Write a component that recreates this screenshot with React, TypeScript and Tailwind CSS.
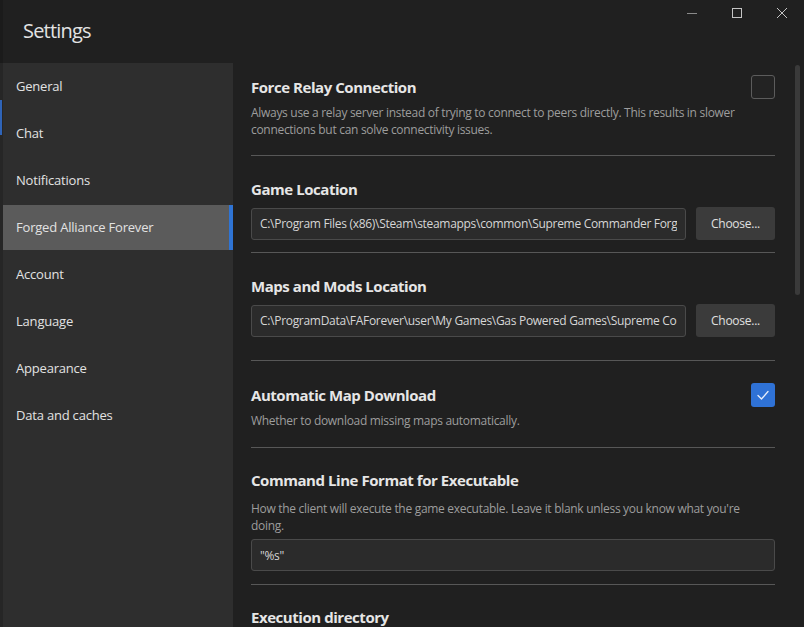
import React from "react";

const font = { fontFamily: '"Open Sans", "Noto Sans", sans-serif' };

const navItems = [
  "General",
  "Chat",
  "Notifications",
  "Forged Alliance Forever",
  "Account",
  "Language",
  "Appearance",
  "Data and caches",
];

function Heading({ children }: { children: React.ReactNode }) {
  return (
    <div className="text-[15px] leading-[20px] font-bold text-[#e6e6e6] tracking-[-0.45px]">
      {children}
    </div>
  );
}

function Desc({ children, className = "" }: { children: React.ReactNode; className?: string }) {
  return (
    <div className={`text-[12px] leading-[17px] text-[#9d9d9d] tracking-[-0.3px] ${className}`}>
      {children}
    </div>
  );
}

function Field({ value, className = "" }: { value: string; className?: string }) {
  return (
    <input
      readOnly
      value={value}
      className={`h-[32px] rounded-[3px] border border-[#4a4a4a] bg-[#2b2b2b] px-[8px] text-[12px] text-[#d6d6d6] tracking-[-0.3px] outline-none ${className}`}
      style={font}
    />
  );
}

function Checkbox({ checked }: { checked?: boolean }) {
  if (checked) {
    return (
      <div className="w-[24px] h-[24px] rounded-[3px] bg-[#2f72d6] flex items-center justify-center">
        <svg width="14" height="14" viewBox="0 0 14 14" fill="none">
          <path d="M2 7.5 L5.5 11 L12 3.5" stroke="#e8eefa" strokeWidth="1.3" strokeLinecap="round" strokeLinejoin="round" />
        </svg>
      </div>
    );
  }
  return <div className="w-[24px] h-[24px] rounded-[3px] border border-[#5c5c5c] bg-[#232323]" />;
}

function ChooseButton() {
  return (
    <div className="w-[79px] h-[33px] shrink-0 rounded-[3px] bg-[#3b3b3b] flex items-center justify-center text-[12px] text-[#e0e0e0] tracking-[-0.25px]">
      Choose...
    </div>
  );
}

export default function App() {
  return (
    <div className="w-[804px] h-[627px] bg-[#202020] flex flex-col overflow-hidden" style={font}>
      {/* title bar */}
      <div className="h-[63px] flex shrink-0">
        <div className="w-[3px] bg-[#1b1b1b]" />
        <div className="flex-1 relative">
          <div className="pl-[20px] pt-[17px] text-[20px] leading-[28px] text-[#e3e3e3] tracking-[-0.8px]">
            Settings
          </div>
          <div className="absolute top-0 right-0 flex">
            <div className="w-[45px] h-[25px] flex items-center justify-center">
              <svg width="12" height="12" viewBox="0 0 12 12">
                <path d="M1 6.5 H11" stroke="#8a8a8a" strokeWidth="1" />
              </svg>
            </div>
            <div className="w-[45px] h-[25px] flex items-center justify-center">
              <svg width="12" height="12" viewBox="0 0 12 12">
                <rect x="1.5" y="1.5" width="9" height="9" stroke="#c4c4c4" strokeWidth="1" fill="none" />
              </svg>
            </div>
            <div className="w-[45px] h-[25px] flex items-center justify-center">
              <svg width="12" height="12" viewBox="0 0 12 12">
                <path d="M1 1 L11 11 M11 1 L1 11" stroke="#c4c4c4" strokeWidth="1" />
              </svg>
            </div>
          </div>
        </div>
      </div>

      <div className="flex flex-1 min-h-0">
        {/* left strip */}
        <div className="w-[3px] bg-[#262626] flex flex-col">
          <div className="h-[37px]" />
          <div className="h-[35px] w-[2px] bg-[#2f64b8]" />
        </div>

        {/* sidebar */}
        <div className="w-[230px] bg-[#2e2e2e] flex flex-col">
          {navItems.map((item) => {
            const sel = item === "Forged Alliance Forever";
            return (
              <div key={item} className="h-[47px] flex items-center">
                <div
                  className={`w-full h-[45px] flex items-center pl-[13px] text-[13px] text-[#e2e2e2] tracking-[-0.2px] ${
                    sel ? "bg-[#5b5b5b] border-r-[4px] border-[#2f74d4]" : ""
                  }`}
                >
                  {item}
                </div>
              </div>
            );
          })}
        </div>

        {/* content */}
        <div className="flex-1 flex min-w-0">
          <div className="w-[524px] ml-[18px] flex flex-col">
            {/* Force Relay */}
            <div className="pt-[12px] pb-[17px] border-b border-[#575757]">
              <div className="flex items-center justify-between h-[24px]">
                <Heading>Force Relay Connection</Heading>
                <Checkbox />
              </div>
              <Desc className="mt-[5px]">
                Always use a relay server instead of trying to connect to peers directly. This results in slower
                connections but can solve connectivity issues.
              </Desc>
            </div>

            {/* Game Location */}
            <div className="pt-[23px] pb-[12px] border-b border-[#575757]">
              <Heading>Game Location</Heading>
              <div className="mt-[8px] flex gap-[10px] items-center">
                <Field className="flex-1 min-w-0" value="C:\Program Files (x86)\Steam\steamapps\common\Supreme Commander Forged Alliance" />
                <ChooseButton />
              </div>
            </div>

            {/* Maps and Mods */}
            <div className="pt-[23px] pb-[23px] border-b border-[#575757]">
              <Heading>Maps and Mods Location</Heading>
              <div className="mt-[8px] flex gap-[10px] items-center">
                <Field className="flex-1 min-w-0" value="C:\ProgramData\FAForever\user\My Games\Gas Powered Games\Supreme Commander Forged Alliance" />
                <ChooseButton />
              </div>
            </div>

            {/* Automatic Map Download */}
            <div className="pt-[22px] pb-[18px] border-b border-[#575757]">
              <div className="flex items-center justify-between h-[24px]">
                <Heading>Automatic Map Download</Heading>
                <Checkbox checked />
              </div>
              <Desc className="mt-[5px]">Whether to download missing maps automatically.</Desc>
            </div>

            {/* Command Line */}
            <div className="pt-[22px] pb-[13px] border-b border-[#575757]">
              <Heading>Command Line Format for Executable</Heading>
              <Desc className="mt-[10px]">
                How the client will execute the game executable. Leave it blank unless you know what you're
                doing.
              </Desc>
              <Field className="mt-[5px] w-full block" value={'"%s"'} />
            </div>

            {/* Execution directory */}
            <div className="pt-[22px]">
              <Heading>Execution directory</Heading>
            </div>
          </div>

          {/* scrollbar */}
          <div className="ml-auto w-[9px] pt-[2px] flex justify-start">
            <div className="w-[5px] h-[230px] rounded-[3px] bg-[#3a3a3a]" />
          </div>
        </div>
      </div>
    </div>
  );
}
